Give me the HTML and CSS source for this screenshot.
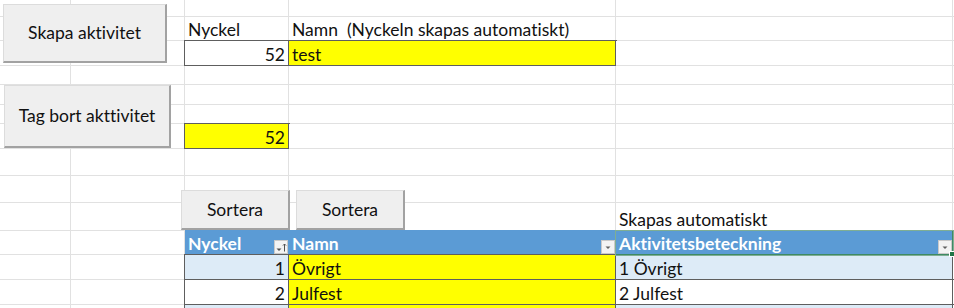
FILE: index.html
```html
<!DOCTYPE html>
<html lang="sv">
<head>
<meta charset="utf-8">
<title>Aktiviteter</title>
<link rel="stylesheet" href="styles.css">
</head>
<body>
<div class="sheet">
  <div class="grid">
    <!-- row 0 -->
    <div class="c"></div><div class="c"></div><div class="c"></div><div class="c"></div><div class="c"></div><div class="c"></div><div class="c"></div>
    <!-- row 1 -->
    <div class="c"></div><div class="c"></div><div class="c"></div>
    <div class="c">Nyckel</div>
    <div class="c pre">Namn  (Nyckeln skapas automatiskt)</div>
    <div class="c"></div><div class="c"></div>
    <!-- row 2 -->
    <div class="c"></div><div class="c"></div><div class="c"></div>
    <div class="c num bx">52</div>
    <div class="c yel bx">test</div>
    <div class="c"></div><div class="c"></div>
    <!-- row 3 -->
    <div class="c"></div><div class="c"></div><div class="c"></div><div class="c"></div><div class="c"></div><div class="c"></div><div class="c"></div>
    <!-- row 4 -->
    <div class="c"></div><div class="c"></div><div class="c"></div><div class="c"></div><div class="c"></div><div class="c"></div><div class="c"></div>
    <!-- row 5 -->
    <div class="c"></div><div class="c"></div><div class="c"></div><div class="c"></div><div class="c"></div><div class="c"></div><div class="c"></div>
    <!-- row 6 -->
    <div class="c"></div><div class="c"></div><div class="c"></div>
    <div class="c num yel bx">52</div>
    <div class="c"></div><div class="c"></div><div class="c"></div>
    <!-- row 7 -->
    <div class="c"></div><div class="c"></div><div class="c"></div><div class="c"></div><div class="c"></div><div class="c"></div><div class="c"></div>
    <!-- row 8 -->
    <div class="c"></div><div class="c"></div><div class="c"></div><div class="c"></div><div class="c"></div><div class="c"></div><div class="c"></div>
    <!-- row 9 -->
    <div class="c"></div><div class="c"></div><div class="c"></div><div class="c"></div><div class="c"></div>
    <div class="c">Skapas automatiskt</div>
    <div class="c"></div>
    <!-- row 10: table header -->
    <div class="c rowsel"></div><div class="c"></div><div class="c"></div>
    <div class="c th">Nyckel
      <span class="filter"><svg width="14" height="14" viewBox="0 0 14 14"><rect x="0.5" y="0.5" width="13" height="13" fill="#f3f3f3" stroke="#c9c9c9"/><path d="M2.5 8.5h5l-2.5 2.5z" fill="#505050"/><path d="M10.5 4v7.5M9 5.5l1.5-1.5 1.5 1.5" stroke="#505050" stroke-width="1" fill="none"/></svg></span>
    </div>
    <div class="c th">Namn
      <span class="filter"><svg width="14" height="14" viewBox="0 0 14 14"><rect x="0.5" y="0.5" width="13" height="13" fill="#f3f3f3" stroke="#c9c9c9"/><path d="M4.5 6.5h5l-2.5 2.5z" fill="#606060"/></svg></span>
    </div>
    <div class="c th sel">Aktivitetsbeteckning
      <span class="filter"><svg width="14" height="14" viewBox="0 0 14 14"><rect x="0.5" y="0.5" width="13" height="13" fill="#f3f3f3" stroke="#c9c9c9"/><path d="M4.5 6.5h5l-2.5 2.5z" fill="#606060"/></svg></span>
    </div>
    <div class="c"></div>
    <!-- row 11 -->
    <div class="c"></div><div class="c"></div><div class="c"></div>
    <div class="c num band bx">1</div>
    <div class="c yel bx">Övrigt</div>
    <div class="c band bx">1 Övrigt</div>
    <div class="c"></div>
    <!-- row 12 -->
    <div class="c"></div><div class="c"></div><div class="c"></div>
    <div class="c num bx">2</div>
    <div class="c yel bx">Julfest</div>
    <div class="c bx">2 Julfest</div>
    <div class="c"></div>
    <!-- row 13 -->
    <div class="c"></div><div class="c"></div><div class="c"></div>
    <div class="c num band bx"></div>
    <div class="c yel bx"></div>
    <div class="c band bx"></div>
    <div class="c"></div>
  </div>

  <button class="btn btn-skapa" type="button">Skapa aktivitet</button>
  <button class="btn btn-tagbort" type="button">Tag bort akttivitet</button>
  <button class="btn btn-sort1" type="button">Sortera</button>
  <button class="btn btn-sort2" type="button">Sortera</button>
</div>
</body>
</html>
```

FILE: styles.css
```css
* { box-sizing: border-box; }

html, body {
  margin: 0;
  padding: 0;
  background: #ffffff;
}

body {
  font-family: Lato, "Open Sans", "Liberation Sans", sans-serif;
  font-size: 17.5px;
  font-variant-ligatures: none;
  color: #111111;
  overflow: hidden;
}

.sheet {
  position: relative;
  width: 954px;
  height: 308px;
  overflow: hidden;
}

.grid {
  display: grid;
  grid-template-columns: 3px 68px 114px 104px 327px 337px 1fr;
  grid-template-rows: 17px 24px 25px 19px 20px 19px 25px 27px 27px 28px 24px 25px 25px 30px;
}

.c {
  background: #ffffff;
  border-right: 1px solid #e1e1e1;
  border-bottom: 1px solid #e1e1e1;
  display: flex;
  align-items: flex-end;
  padding: 0 3px 0 3px;
  line-height: 20px;
  white-space: nowrap;
  position: relative;
}

.pre { white-space: pre; }

.num { justify-content: flex-end; }

.yel { background: #ffff00; }

.band { background: #ddebf7; }

.bx {
  border-right-color: #5e5e5e;
  border-bottom-color: #5e5e5e;
  box-shadow: 0 0 0 1px #5e5e5e;
}

.rowsel {
  border-right: 1px solid #217346;
}

.th {
  background: #5b9bd5;
  color: #ffffff;
  font-weight: 700;
  border-right-color: #5b9bd5;
  border-bottom-color: #4f7fb0;
  box-shadow: 0 -1px 0 0 #5b9bd5;
}

.th.sel {
  border-right-color: #3f8a63;
  border-bottom-color: #3f8a63;
  box-shadow: 0 0 0 1px #7fae93;
  z-index: 1;
}

.th.sel::after {
  content: "";
  position: absolute;
  right: -3px;
  bottom: -3px;
  width: 4px;
  height: 4px;
  background: #217346;
  border: 1px solid #ffffff;
}

.filter {
  position: absolute;
  right: 0;
  bottom: 0;
  width: 14px;
  height: 14px;
  display: block;
}

.filter svg { display: block; }

.btn {
  position: absolute;
  margin: 0;
  padding: 0;
  font-family: inherit;
  font-size: 17.5px;
  font-variant-ligatures: none;
  color: #111111;
  background: #efefef;
  border: 1px solid #dcdcdc;
  border-right: 2px solid #a2a2a2;
  border-bottom: 2px solid #a2a2a2;
  display: flex;
  align-items: center;
  justify-content: center;
  line-height: 20px;
  z-index: 2;
}

.btn-skapa { left: 3px; top: 4px; width: 164px; height: 59px; }
.btn-tagbort { left: 4px; top: 85px; width: 167px; height: 63px; }
.btn-sort1 { left: 181px; top: 190px; width: 109px; height: 40px; }
.btn-sort2 { left: 296px; top: 190px; width: 109px; height: 40px; }
```
